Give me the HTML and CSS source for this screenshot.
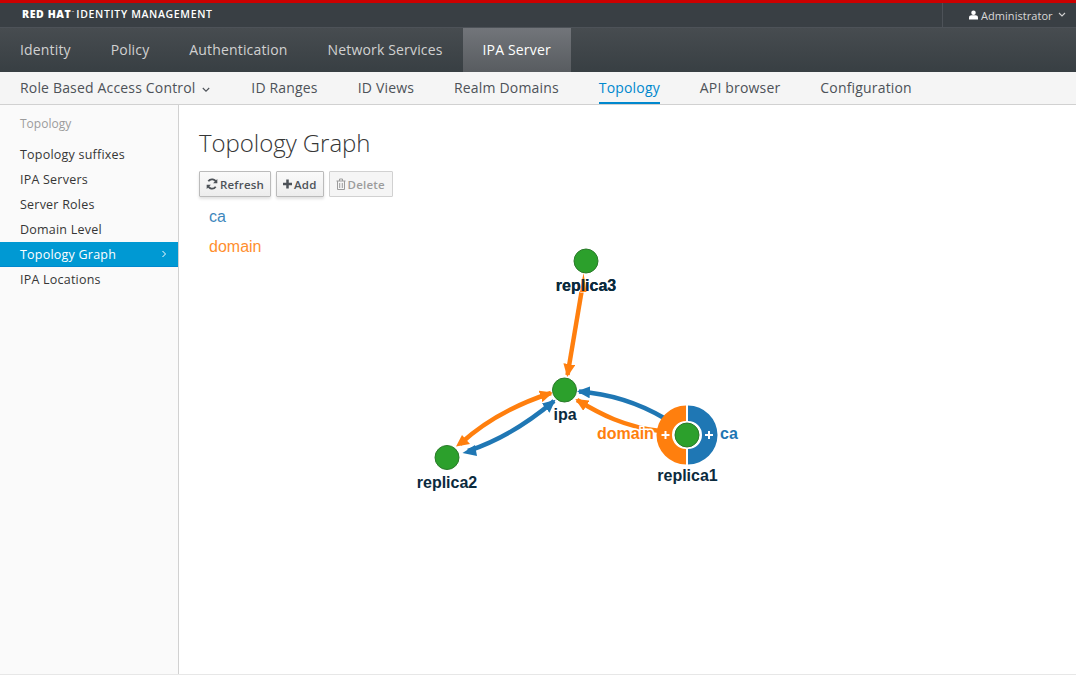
FILE: index.html
```html
<!DOCTYPE html>
<html lang="en">
<head>
<meta charset="utf-8">
<title>Topology Graph</title>
<link rel="stylesheet" href="styles.css">
</head>
<body>
<div class="app">
  <header class="utility">
    <div class="brand"><b>RED HAT</b><sup class="tm">™</sup><span>IDENTITY MANAGEMENT</span></div>
    <div class="user">
      <svg class="user-icon" viewBox="0 0 12 12" width="9" height="10"><circle cx="6" cy="3" r="3" fill="#fff"/><path d="M0 12V9.2C0 7.6 1.6 6.4 3.2 6.4h5.6C10.400 6.400 12 7.600 12 9.200V12z" fill="#fff"/></svg>
      <span>Administrator</span>
      <svg class="caret" viewBox="0 0 8 6" width="8" height="6"><path d="M1 1l3 3 3-3" fill="none" stroke="#d1d1d1" stroke-width="1.100"/></svg>
    </div>
  </header>
  <nav class="primary">
    <a>Identity</a><a>Policy</a><a>Authentication</a><a>Network Services</a><a class="active">IPA Server</a>
  </nav>
  <nav class="secondary">
    <a>Role Based Access Control <svg class="caret2" viewBox="0 0 8 6" width="8" height="6"><path d="M.8 1l3.200 3.200L7.200 1" fill="none" stroke="#4d5258" stroke-width="1.100"/></svg></a>
    <a>ID Ranges</a><a>ID Views</a><a>Realm Domains</a><a class="active">Topology</a><a>API browser</a><a>Configuration</a>
  </nav>
  <div class="body">
    <aside class="side">
      <div class="side-title">Topology</div>
      <ul class="side-list">
        <li>Topology suffixes</li>
        <li>IPA Servers</li>
        <li>Server Roles</li>
        <li>Domain Level</li>
        <li class="active"><span>Topology Graph</span><svg viewBox="0 0 6 8" width="6" height="8"><path d="M1.500 1l3 3-3 3" fill="none" stroke="#fff" stroke-width="1"/></svg></li>
        <li>IPA Locations</li>
      </ul>
    </aside>
    <main class="main">
      <h1>Topology Graph</h1>
      <div class="toolbar">
        <button class="btn"><svg viewBox="0 0 12 12" width="12" height="12"><path d="M10.300 4.700A4.500 4.500 0 0 0 2.300 3.300" fill="none" stroke="#4d5258" stroke-width="1.800"/><path d="M11.300 1v4.200H7.100z" fill="#4d5258"/><path d="M1.700 7.300A4.500 4.500 0 0 0 9.700 8.700" fill="none" stroke="#4d5258" stroke-width="1.800"/><path d="M.7 11V6.800h4.200z" fill="#4d5258"/></svg>Refresh</button>
        <button class="btn"><svg viewBox="0 0 10 10" width="9" height="10"><path d="M3.600 0h2.800v3.600H10v2.800H6.400V10H3.600V6.400H0V3.600h3.600z" fill="#4d5258"/></svg>Add</button>
        <button class="btn disabled"><svg viewBox="0 0 10 12" width="10" height="12"><path d="M.5 3h9M3.500 3V1h3v2M1.500 3v8.500h7V3M3.700 5v5M6.300 5v5" fill="none" stroke="#9c9c9c" stroke-width="1"/></svg>Delete</button>
      </div>
      <div class="legend">
        <div class="ca">ca</div>
        <div class="domain">domain</div>
      </div>
      <svg class="graph" viewBox="0 0 1076 675" width="1076" height="675">
        <defs>
          <marker id="mo" markerUnits="userSpaceOnUse" markerWidth="14" markerHeight="12" refX="11" refY="6" orient="auto"><path d="M0 0L13 6 0 12z" fill="#ff7f0e"/></marker>
          <marker id="mb" markerUnits="userSpaceOnUse" markerWidth="14" markerHeight="12" refX="11" refY="6" orient="auto"><path d="M0 0L13 6 0 12z" fill="#1f77b4"/></marker>
        </defs>
        <g fill="none" stroke-width="4.500">
          <path d="M582.500 286L567.500 375" stroke="#ff7f0e" marker-end="url(#mo)"/>
          <path d="M460 444C484 422 514 405 551 393" stroke="#ff7f0e" marker-end="url(#mo)"/>
          <path d="M468 451C498 441 528 423 554 401" stroke="#1f77b4" marker-end="url(#mb)"/>
          <path d="M664 418C640 404 612 394 579 391.500" stroke="#1f77b4" marker-end="url(#mb)"/>
          <path d="M660 431C625 427 600 414 577 400" stroke="#ff7f0e" marker-end="url(#mo)"/>
        </g>
        <path d="M456 446.500L470 444 462 435z" fill="#ff7f0e"/>
        <path d="M462.500 453L475 445 477 456z" fill="#1f77b4"/>
        <path d="M686 405.500A29.500 29.500 0 0 0 686 464.500V449A14 14 0 0 1 686 421z" fill="#ff7f0e"/>
        <path d="M688 405.500A29.500 29.500 0 0 1 688 464.500V449A14 14 0 0 0 688 421z" fill="#1f77b4"/>
        <path d="M665.500 431v8M661.500 435h8M709 431v8M705 435h8" stroke="#fff" stroke-width="2" fill="none"/>
        <g fill="#2ca02c" stroke="#2a7a2a" stroke-width="1">
          <circle cx="586" cy="261" r="12"/>
          <circle cx="564.500" cy="390" r="12"/>
          <circle cx="447" cy="457.500" r="12"/>
          <circle cx="687" cy="435" r="12"/>
        </g>
        <g class="node-label">
          <text x="586" y="291">replica3</text>
          <text x="565" y="420">ipa</text>
          <text x="447" y="488">replica2</text>
          <text x="687.500" y="481">replica1</text>
        </g>
        <path d="M583.500 273L580 292 586.500 292z" fill="#ff7f0e"/>
        <text class="label-top" x="586" y="291">replica3</text>
        <text class="port-d" x="597" y="439">domain</text>
        <text class="port-c" x="720" y="439">ca</text>
      </svg>
    </main>
  </div>
</div>
</body>
</html>
```
FILE: styles.css
```css
* { box-sizing: border-box; }
html, body { margin: 0; height: 100%; }
body { font-family: "Open Sans", sans-serif; color: #363636; background: #fff; overflow: hidden; }
.app { width: 1076px; height: 675px; display: flex; flex-direction: column; border-bottom: 1px solid #e7e7e7; }
.utility { height: 28px; flex: none; background: #393f44; border-top: 3px solid #cc0000; border-bottom: 1px solid #4d5258; display: flex; justify-content: space-between; color: #fff; }
.brand { padding-left: 22px; font-size: 10.500px; line-height: 23px; font-weight: 600; letter-spacing: .65px; white-space: nowrap; }
.brand b { font-weight: 800; font-size: 10.500px; letter-spacing: .6px; }
.brand span { margin-left: 2px; }
.tm { font-size: 3px; vertical-align: 5px; line-height: 0; }
.user { width: 134px; border-left: 1px solid #4d5258; display: flex; align-items: center; padding-left: 26px; gap: 3px; font-size: 11px; color: #d8d8d8; letter-spacing: .05px; }
.user-icon { flex: none; }
.caret { margin-left: 2px; flex: none; }
.primary { height: 44px; flex: none; background: linear-gradient(#474c50, #383f43); display: flex; }
.primary a { padding: 0 20px; font-size: 14px; line-height: 44px; color: #d1d1d1; letter-spacing: .16px; }
.primary a.active { background: linear-gradient(#72757a, #585c60); color: #fff; }
.secondary { height: 33px; flex: none; background: #f5f5f5; border-bottom: 1px solid #d1d1d1; display: flex; }
.secondary a { margin: 0 20px; font-size: 14px; line-height: 32px; height: 32px; color: #4d5258; white-space: nowrap; letter-spacing: .17px; }
.secondary a:first-child { margin-right: 21px; }
.secondary a.active { color: #0088ce; border-bottom: 2px solid #0088ce; }
.caret2 { margin-left: 3px; }
.body { flex: 1; display: flex; min-height: 0; }
.side { width: 179px; flex: none; background: #fafafa; border-right: 1px solid #d1d1d1; padding-top: 11px; }
.side-title { padding-left: 20px; font-size: 12px; line-height: 16px; color: #9c9c9c; margin-bottom: 10px; }
.side-list { list-style: none; margin: 0; padding: 0; }
.side-list li { height: 25px; line-height: 25px; padding: 0 11px 0 20px; font-size: 12.500px; letter-spacing: .22px; color: #363636; display: flex; justify-content: space-between; align-items: center; }
.side-list li.active { background: #0099d3; border-bottom: 1px solid #0088ce; color: #fff; }
.main { flex: 1; padding: 0 20px; position: relative; }
h1 { margin: 21px 0 0; font-size: 24px; line-height: 34px; font-weight: 300; color: #363636; letter-spacing: -.05px; }
.toolbar { display: flex; gap: 5px; margin-top: 11px; }
.btn { height: 26px; padding: 0 6px; display: flex; align-items: center; gap: 2px; font-family: "Open Sans", sans-serif; font-size: 11.500px; font-weight: 600; letter-spacing: .2px; color: #4d5258; background: linear-gradient(#fafafa, #ededed); border: 1px solid #bbb; border-radius: 1px; box-shadow: 0 2px 3px rgba(3,3,3,.12); }
.btn.disabled { color: #9c9c9c; background: #f5f5f5; border-color: #d1d1d1; box-shadow: none; padding-right: 7px; }
.legend { padding-left: 10px; margin-top: 5px; font-family: "Liberation Sans", sans-serif; font-size: 16px; line-height: 30px; opacity: .88; }
.ca { color: #1f77b4; }
.domain { color: #ff7f0e; }
.graph { position: absolute; left: -179px; top: -105px; pointer-events: none; }
.node-label text { font-family: "Liberation Sans", sans-serif; font-size: 16px; font-weight: 700; fill: #0b2a3d; text-anchor: middle; stroke: #fff; stroke-width: 3px; paint-order: stroke; }
.label-top { font-family: "Liberation Sans", sans-serif; font-size: 16px; font-weight: 700; fill: #0b2a3d; text-anchor: middle; }
.port-d, .port-c { font-family: "Liberation Sans", sans-serif; font-size: 16px; font-weight: 700; stroke: #fff; stroke-width: 3px; paint-order: stroke; }
.port-d { fill: #ff7f0e; }
.port-c { fill: #1f77b4; }
```
